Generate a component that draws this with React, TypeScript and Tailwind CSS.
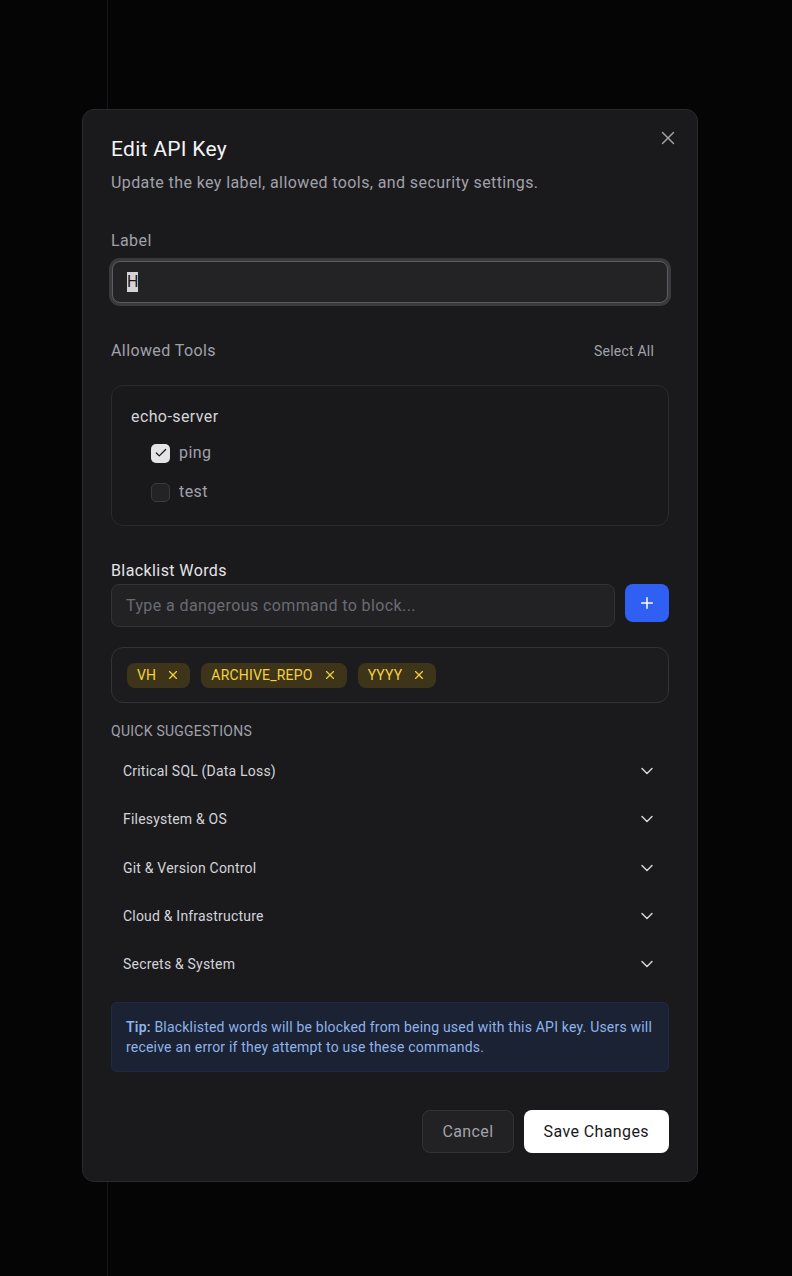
import { Check, ChevronDown, Plus, X } from 'lucide-react';

const TOOLS = [
  { name: 'ping', checked: true },
  { name: 'test', checked: false },
];

const BLACKLIST = ['VH', 'ARCHIVE_REPO', 'YYYY'];

const SUGGESTIONS = [
  'Critical SQL (Data Loss)',
  'Filesystem & OS',
  'Git & Version Control',
  'Cloud & Infrastructure',
  'Secrets & System',
];

export default function App() {
  return (
    <div className="min-h-screen bg-[#050505] font-['Roboto',sans-serif]">
      {/* Page behind the overlay */}
      <div className="flex min-h-screen">
        <div className="w-[108px] border-r border-[#161618]" />
        <div className="flex-1" />
      </div>

      {/* Modal */}
      <div className="fixed inset-0 pt-[109px] pl-[82px]">
        <div className="w-[616px] rounded-xl border border-[#2a2a2e] bg-[#1a1a1d] p-7 relative">
          <button className="absolute right-[18px] top-[17px] text-[#a1a1a6]">
            <X size={22} strokeWidth={1.6} />
          </button>

          {/* Header */}
          <h2 className="text-[21px] leading-6 tracking-[0.3px] text-[#f4f4f5] -mt-[1px]">Edit API Key</h2>
          <p className="mt-[10px] text-base leading-6 tracking-[0.4px] text-[#a1a1aa]">
            Update the key label, allowed tools, and security settings.
          </p>

          {/* Label */}
          <div className="mt-[34px]">
            <label className="block text-base leading-6 tracking-[0.4px] text-[#a1a1aa]">Label</label>
            <div className="mt-[8px] mx-[1px] flex h-[42px] items-center rounded-lg border border-[#5c5c62] bg-[#232326] px-[14px] shadow-[0_0_0_3px_#3a3a3e]">
              <span className="bg-[#d4d4d8] text-[#18181b] text-base leading-5">H</span>
            </div>
          </div>

          {/* Allowed tools */}
          <div className="mt-[36px] flex items-center justify-between">
            <span className="text-base leading-6 tracking-[0.4px] text-[#a1a1aa]">Allowed Tools</span>
            <button className="px-[15px] text-sm leading-5 tracking-[0.2px] text-[#a1a1aa]">Select All</button>
          </div>

          <div className="mt-[22px] rounded-xl border border-[#2a2a2e] bg-[#19191c] px-[19px] pt-[19px] pb-[21px]">
            <div className="text-base leading-6 tracking-[0.4px] text-[#d4d4d8]">echo-server</div>
            <div className="mt-3 flex flex-col gap-[15px] pl-5">
              {TOOLS.map(tool => (
                <label key={tool.name} className="flex h-6 items-center gap-[9px]">
                  {tool.checked ? (
                    <span className="flex h-[19px] w-[19px] items-center justify-center rounded-[5px] bg-[#e4e4e7] text-[#18181b]">
                      <Check size={14} strokeWidth={2.2} />
                    </span>
                  ) : (
                    <span className="h-[19px] w-[19px] rounded-[5px] border border-[#3a3a3f] bg-[#232326]" />
                  )}
                  <span className="text-base leading-6 tracking-[0.4px] text-[#a1a1aa]">{tool.name}</span>
                </label>
              ))}
            </div>
          </div>

          {/* Blacklist */}
          <div className="mt-[35px]">
            <label className="block text-base leading-5 tracking-[0.4px] text-[#e4e4e7]">Blacklist Words</label>
            <div className="mt-[3px] flex items-start gap-[10px]">
              <div className="flex h-[43px] flex-1 items-center rounded-lg border border-[#333337] bg-[#222225] px-[14px] text-base tracking-[0.4px] text-[#6b6b72]">
                Type a dangerous command to block...
              </div>
              <button className="flex h-[38px] w-[44px] items-center justify-center rounded-lg bg-[#2f60f3] text-white">
                <Plus size={18} strokeWidth={2} />
              </button>
            </div>

            <div className="mt-5 flex h-[56px] items-center gap-[11px] rounded-xl border border-[#333337] bg-[#1c1c1f] px-[15px]">
              {BLACKLIST.map(word => (
                <span
                  key={word}
                  className="flex h-[25px] items-center gap-[10px] rounded-lg bg-[#3e3419] pl-[10px] pr-[10px] text-sm leading-5 tracking-[0.2px] text-[#f3d23f]"
                >
                  {word}
                  <X size={14} strokeWidth={2} />
                </span>
              ))}
            </div>
          </div>

          {/* Quick suggestions */}
          <div className="mt-[18px] text-sm leading-5 tracking-[0.25px] text-[#a1a1aa] uppercase">Quick Suggestions</div>
          <div className="mt-[6px] flex flex-col">
            {SUGGESTIONS.map(s => (
              <div key={s} className="flex h-[48.25px] items-center justify-between px-3">
                <span className="text-sm leading-5 tracking-[0.2px] text-[#d4d4d8]">{s}</span>
                <ChevronDown size={20} strokeWidth={1.8} className="text-[#d4d4d8]" />
              </div>
            ))}
          </div>

          {/* Tip */}
          <div className="mt-[14px] rounded-md border border-[#1f2b45] bg-[#1a2233] px-[14px] py-[14px] text-sm leading-5 tracking-[0.2px] text-[#8fb3ea]">
            <span className="font-semibold">Tip:</span> Blacklisted words will be blocked from being used with this API key. Users will receive an error if they attempt to use these commands.
          </div>

          {/* Footer */}
          <div className="mt-[38px] flex justify-end gap-[10px]">
            <button className="h-[43px] rounded-lg border border-[#333337] bg-[#222225] px-[19px] text-base tracking-[0.4px] text-[#a1a1aa]">
              Cancel
            </button>
            <button className="h-[43px] rounded-lg bg-white px-5 text-base tracking-[0.4px] text-[#18181b]">
              Save Changes
            </button>
          </div>
        </div>
      </div>
    </div>
  );
}
